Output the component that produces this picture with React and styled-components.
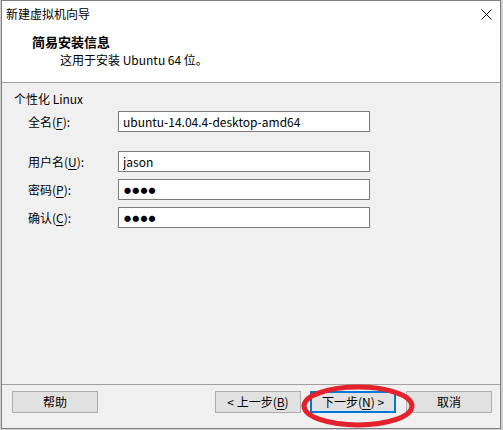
import React from "react";
import styled, { createGlobalStyle } from "styled-components";

const Global = createGlobalStyle`
  html, body { margin: 0; padding: 0; background: #cfcfcf; }
  body { width: 503px; height: 430px; overflow: hidden; font-family: "Noto Sans CJK SC", "Microsoft YaHei", sans-serif; }
`;

const Window = styled.div`
  position: relative;
  margin-left: 1px;
  width: 498px;
  height: 427px;
  border: 1px solid #7f7f7f;
  background: #ffffff;
  display: flex;
  flex-direction: column;
  font-size: 12px;
  color: #000;
`;

const TitleBar = styled.div`
  height: 26px;
  display: flex;
  align-items: center;
  justify-content: space-between;
  padding: 0 8px 0 4px;
  background: #fff;
`;

const Title = styled.span`
  font-size: 12px;
  line-height: 16px;
`;

const Header = styled.div`
  height: 55px;
  padding-left: 30px;
  display: flex;
  flex-direction: column;
  justify-content: flex-start;
  border-bottom: 1px solid #a0a0a0;
`;

const HeaderTitle = styled.div`
  font-weight: bold;
  font-size: 13px;
  line-height: 17px;
  margin-top: 6px;
`;

const HeaderSub = styled.div`
  padding-left: 28px;
  line-height: 17px;
  margin-top: 1px;
`;

const Body = styled.div`
  flex: 1;
  background: #f0f0f0;
  padding: 8px 0 0 12px;
  display: flex;
  flex-direction: column;
  border-bottom: 1px solid #a0a0a0;
`;

const GroupLabel = styled.div`
  line-height: 16px;
  margin-bottom: 4px;
`;

const Row = styled.div`
  display: flex;
  align-items: center;
  height: 21px;
  margin-top: ${(p) => p.$gap}px;
`;

const Label = styled.label`
  width: 90px;
  padding-left: 14px;
  box-sizing: content-box;
  line-height: 16px;
`;

const Key = styled.span`
  text-decoration: underline;
  text-underline-offset: 2px;
`;

const Field = styled.input`
  width: 252px;
  height: 21px;
  box-sizing: border-box;
  border: 1px solid #7a7a7a;
  background: #fff;
  padding: 0 ${(p) => (p.$dots ? "5px" : "4px")};
  margin: 0;
  font-family: "Noto Sans CJK SC", "Microsoft YaHei", sans-serif;
  font-size: ${(p) => (p.$dots ? "7px" : "12px")};
  letter-spacing: ${(p) => (p.$dots ? "1.2px" : "0")};
  color: #000;
  outline: none;
`;

const Footer = styled.div`
  height: 37px;
  display: flex;
  align-items: flex-start;
  padding: 6px 8px 0 10px;
  background: #f0f0f0;
`;

const Button = styled.button`
  width: 86px;
  height: 22px;
  box-sizing: border-box;
  margin: 0 ${(p) => p.$mr || 0}px 0 0;
  padding: 0;
  background: #e1e1e1;
  border: ${(p) => (p.$default ? "2px solid #0078d7" : "1px solid #adadad")};
  font-family: "Noto Sans CJK SC", "Microsoft YaHei", sans-serif;
  font-size: 12px;
  color: #000;
  line-height: 16px;
`;

const Spacer = styled.div`
  flex: 1;
`;

const Ring = styled.svg`
  position: absolute;
  left: 298px;
  top: 381px;
  pointer-events: none;
`;

export default function App() {
  return (
    <>
      <Global />
      <Window>
        <TitleBar>
          <Title>新建虚拟机向导</Title>
          <svg width="11" height="11" viewBox="0 0 11 11">
            <path d="M0.5 0.5 L10.5 10.5 M10.5 0.5 L0.5 10.5" stroke="#000" strokeWidth="1" />
          </svg>
        </TitleBar>
        <Header>
          <HeaderTitle>简易安装信息</HeaderTitle>
          <HeaderSub>这用于安装 Ubuntu 64 位。</HeaderSub>
        </Header>
        <Body>
          <GroupLabel>个性化 Linux</GroupLabel>
          <Row $gap={0}>
            <Label>全名(<Key>F</Key>):</Label>
            <Field readOnly value="ubuntu-14.04.4-desktop-amd64" />
          </Row>
          <Row $gap={19}>
            <Label>用户名(<Key>U</Key>):</Label>
            <Field readOnly value="jason" />
          </Row>
          <Row $gap={7}>
            <Label>密码(<Key>P</Key>):</Label>
            <Field readOnly $dots value="●●●●" />
          </Row>
          <Row $gap={7}>
            <Label>确认(<Key>C</Key>):</Label>
            <Field readOnly $dots value="●●●●" />
          </Row>
        </Body>
        <Footer>
          <Button>帮助</Button>
          <Spacer />
          <Button $mr={9}>&lt; 上一步(<Key>B</Key>)</Button>
          <Button $mr={10} $default>下一步(<Key>N</Key>) &gt;</Button>
          <Button>取消</Button>
        </Footer>
        <Ring width="118" height="48" viewBox="0 0 118 48">
          <ellipse cx="58" cy="24" rx="54" ry="19" fill="none" stroke="#e3222b" strokeWidth="5" />
        </Ring>
      </Window>
    </>
  );
}
